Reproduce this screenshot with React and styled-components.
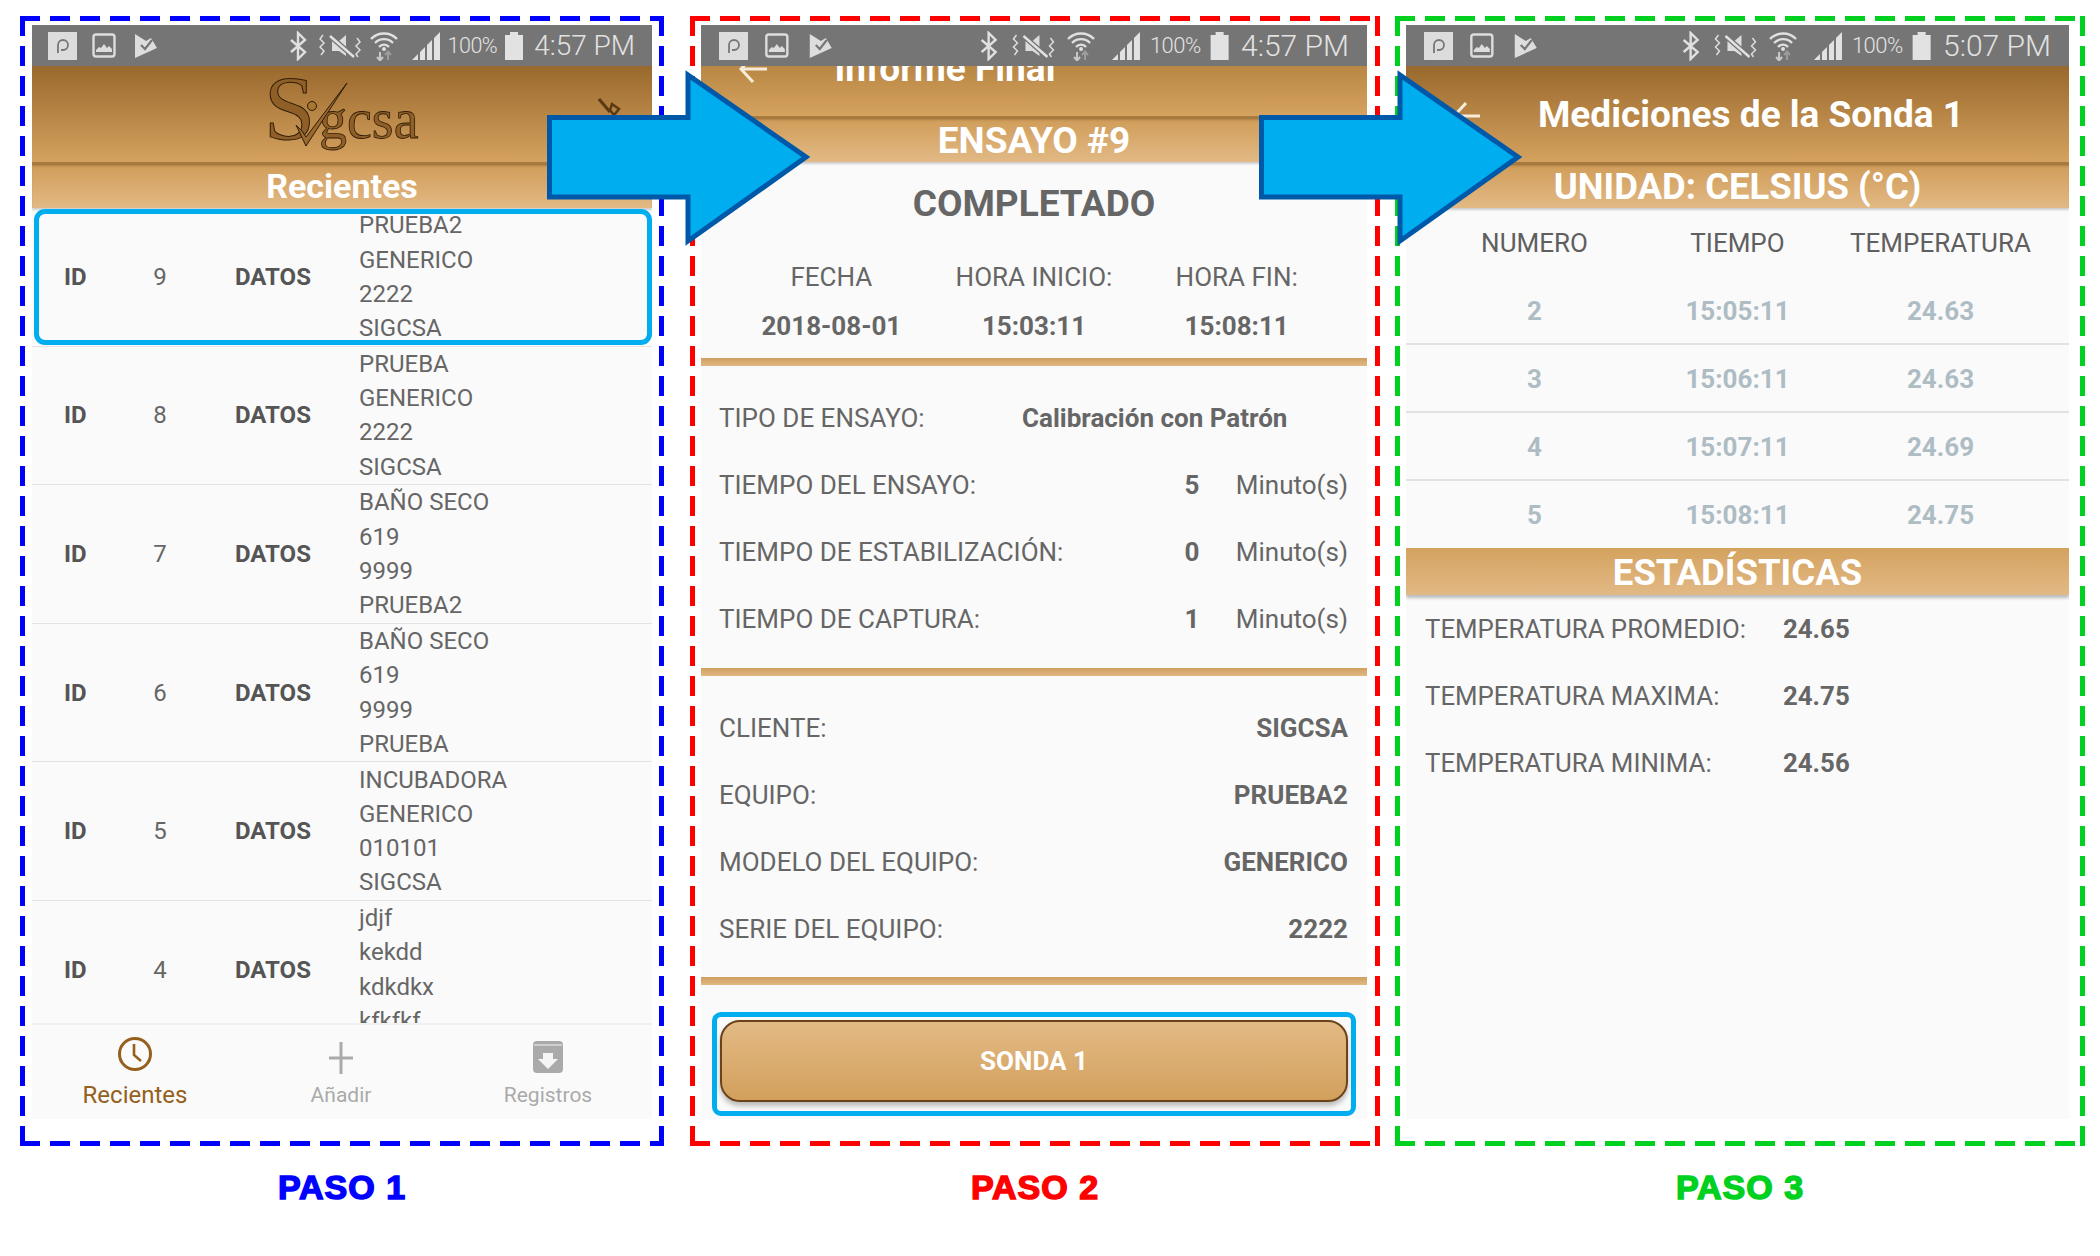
import React from 'react';
import styled, { createGlobalStyle } from 'styled-components';

const Global = createGlobalStyle`
  html, body { margin: 0; padding: 0; background: #fff; }
  body { font-family: Roboto, "Liberation Sans", sans-serif; width: 2100px; height: 1256px; overflow: hidden; }
`;

const Page = styled.div`
  position: relative;
  width: 2100px;
  height: 1256px;
  padding: 16px 0 0 20px;
  box-sizing: border-box;
  display: flex;
  align-items: flex-start;
`;

const Step = styled.section`
  width: ${p => p.$width}px;
  margin-right: ${p => p.$after}px;
  display: flex;
  flex-direction: column;
`;

const Frame = styled.div`
  box-sizing: border-box;
  height: 1130px;
  padding: 9px ${p => p.$right}px 0 ${p => p.$left}px;
  background-image:
    repeating-linear-gradient(90deg, ${p => p.$color} 0 20px, transparent 20px 30px),
    repeating-linear-gradient(90deg, ${p => p.$color} 0 20px, transparent 20px 30px),
    repeating-linear-gradient(0deg, ${p => p.$color} 0 20px, transparent 20px 30px),
    repeating-linear-gradient(0deg, ${p => p.$color} 0 20px, transparent 20px 30px);
  background-size: 100% 5px, 100% 5px, 5px 100%, 5px 100%;
  background-position: 0 0, 0 100%, 0 0, 100% 0;
  background-repeat: no-repeat;
`;

const StepLabel = styled.div`
  margin-top: 21px;
  text-align: center;
  color: ${p => p.$color};
  font: 700 34px/40px "Liberation Sans", Arial, sans-serif;
  letter-spacing: 1px;
  -webkit-text-stroke: 1.5px ${p => p.$color};
`;

const Phone = styled.div`
  height: 1094px;
  background: #fafafa;
  display: flex;
  flex-direction: column;
  overflow: hidden;
`;

const StatusBarWrap = styled.div`
  height: 41px;
  flex: none;
  background: #757575;
  display: flex;
  align-items: center;
  justify-content: space-between;
  padding: 0 ${p => p.$pr}px 0 ${p => p.$pl}px;
  color: #e2e2e2;
`;

const StatusGroup = styled.div`
  display: flex;
  align-items: center;
  gap: ${p => p.$gap}px;
`;

const StatusPercent = styled.span`
  font-size: ${p => p.$size}px;
  font-weight: 300;
  letter-spacing: -0.5px;
`;

const StatusTime = styled.span`
  font-size: ${p => p.$size}px;
  font-weight: 300;
  margin-left: ${p => p.$gap}px;
`;

const Header = styled.header`
  position: relative;
  flex: none;
  height: ${p => p.$h}px;
  background: linear-gradient(${p => p.$from}, #d5a25f);
  color: #fff;
  display: flex;
  align-items: ${p => p.$clipped ? 'flex-start' : 'center'};
  justify-content: center;
  overflow: hidden;
`;

const HeaderTitle = styled.h1`
  margin: ${p => p.$mt}px 0 0 ${p => p.$ml}px;
  font-size: ${p => p.$size}px;
  font-weight: 700;
  line-height: 1.2;
  white-space: nowrap;
`;

const HeaderIcon = styled.svg`
  position: absolute;
  left: ${p => p.$x}px;
  top: ${p => p.$y}px;
`;

const SubHeader = styled.div`
  flex: none;
  height: ${p => p.$h}px;
  box-sizing: border-box;
  background: linear-gradient(#d09c58, #e2b985);
  border-top: 2px solid #a77a3d;
  box-shadow: inset 0 3px 3px -2px rgba(90,55,15,.55), 0 2px 2px rgba(0,0,0,.18);
  position: relative;
  color: #fff;
  font-weight: 700;
  font-size: ${p => p.$size}px;
  display: flex;
  align-items: center;
  justify-content: center;
  white-space: nowrap;
`;

const List = styled.div`
  flex: 1;
  min-height: 0;
  overflow: hidden;
`;

const RecordRow = styled.div`
  position: relative;
  box-sizing: border-box;
  height: 138.6px;
  display: grid;
  grid-template-columns: 64px 107px 124px 1fr;
  padding: 0 0 0 32px;
  align-items: center;
  border-bottom: 1px solid #e3e3e3;
  color: #666;
  font-size: 24px;
  &::after {
    content: '';
    display: ${p => p.$selected ? 'block' : 'none'};
    position: absolute;
    inset: 1px 0 1px 2px;
    border: 5px solid #00aeef;
    border-radius: 11px;
    pointer-events: none;
  }
`;

const RowKey = styled.span`
  font-weight: 700;
  color: #555;
`;

const RowId = styled.span`
  justify-self: start;
  width: 64px;
  text-align: center;
`;

const RowLines = styled.div`
  line-height: 34.3px;
  white-space: nowrap;
`;

const TabBar = styled.nav`
  flex: none;
  height: 96px;
  box-sizing: border-box;
  border-top: 2px solid #f1f1f1;
  background: #fafafa;
  display: grid;
  grid-template-columns: 206px 206px 208px;
`;

const Tab = styled.div`
  display: flex;
  flex-direction: column;
  align-items: center;
  color: ${p => p.$active ? '#94601c' : '#aaa'};
  font-size: ${p => p.$active ? 24 : 21}px;
  line-height: 28px;
`;

const TabIcon = styled.svg`
  height: 44px;
  margin-top: ${p => p.$top}px;
  margin-bottom: ${p => 12 - p.$top}px;
`;

const Status = styled.div`
  height: 63px;
  display: flex;
  align-items: flex-end;
  justify-content: center;
  font-size: 37px;
  font-weight: 700;
  color: #666;
  line-height: 42px;
`;

const DateGrid = styled.div`
  margin-top: 27px;
  padding: 0 29px;
  display: grid;
  grid-template-columns: repeat(3, 1fr);
  grid-auto-rows: 49px;
  align-items: center;
  justify-items: center;
  font-size: 26px;
  color: #666;
`;

const Strong = styled.span`
  font-weight: 700;
`;

const GoldRule = styled.div`
  flex: none;
  height: 8px;
  margin: ${p => p.$mt}px 0 ${p => p.$mb}px;
  background: linear-gradient(#cf9f60, #e1b883);
`;

const InfoRow = styled.div`
  box-sizing: border-box;
  height: 67px;
  display: flex;
  align-items: center;
  padding: 2px 19px 0 18px;
  font-size: 26px;
  color: #666;
  white-space: nowrap;
`;

const InfoLabel = styled.span`
  flex: 1;
`;

const InfoMiddle = styled.span`
  font-weight: 700;
  width: ${p => p.$w}px;
  text-align: center;
`;

const InfoUnit = styled.span`
  width: 144px;
  text-align: right;
`;

const TipoLabel = styled.span`
  width: 303px;
`;

const ButtonHighlight = styled.div`
  margin: 27px 11px 0 11px;
  height: 104px;
  box-sizing: border-box;
  border: 5px solid #00aeef;
  border-radius: 9px;
  padding: 3px 3px 0;
`;

const SondaButton = styled.button`
  display: block;
  width: 100%;
  height: 82px;
  box-sizing: border-box;
  border: 2px solid #6b431a;
  border-radius: 20px;
  background: linear-gradient(#e3ba85, #d2a05c);
  box-shadow: 0 4px 5px rgba(0,0,0,.25);
  color: #fff;
  font: 700 26px Roboto, sans-serif;
`;

const TableHead = styled.div`
  display: grid;
  grid-template-columns: ${p => p.$cols};
  height: 69px;
  align-items: center;
  justify-items: center;
  font-size: 26px;
  color: #5f5f5f;
  padding: 0 27px;
`;

const TableRow = styled.div`
  display: grid;
  grid-template-columns: ${p => p.$cols};
  box-sizing: border-box;
  height: ${p => p.$last ? 67 : 68}px;
  align-items: center;
  justify-items: center;
  font-size: 26px;
  font-weight: 700;
  color: #aebcc4;
  padding: 1px 27px 0;
  border-bottom: ${p => p.$last ? 'none' : '2px solid #e2e2e2'};
`;

const StatsBar = styled.div`
  flex: none;
  height: 47px;
  box-sizing: border-box;
  padding-top: 2px;
  background: linear-gradient(#d4a25f, #e2b985);
  box-shadow: 0 3px 3px rgba(0,0,0,.25);
  color: #fff;
  font-size: 36.500px;
  font-weight: 700;
  display: flex;
  align-items: center;
  justify-content: center;
`;

const StatRow = styled.div`
  box-sizing: border-box;
  height: 67px;
  display: grid;
  grid-template-columns: 358px 1fr;
  align-items: center;
  padding: 0 0 0 19px;
  font-size: 25.8px;
  color: #666;
`;

const ArrowLayer = styled.svg`
  position: absolute;
  left: ${p => p.$x}px;
  top: 70px;
`;

function StatusBar({ time, wide }) {
  const k = wide ? 1.07 : 1;
  return (
    <StatusBarWrap $pl={wide ? 17 : 16} $pr={wide ? 18 : 17}>
      <StatusGroup $gap={15}>
        <svg width={29 * k} height="28" viewBox="0 0 29 28">
          <rect width="29" height="28" fill="#dcdcdc" />
          <path d="M10 21V13a5 5 0 1 1 5 5h-2" fill="none" stroke="#777" strokeWidth="1.8" />
        </svg>
        <svg width={24 * k} height="25" viewBox="0 0 24 25">
          <rect x="1.5" y="1.5" width="21" height="22" rx="2.5" fill="none" stroke="#ddd" strokeWidth="2.4" />
          <path d="M4 19h16v-3l-3-3-2 2-3-4-3 4-2-1-3 3z" fill="#ddd" />
        </svg>
        <svg width={22 * k} height="24" viewBox="0 0 22 24" style={{ marginLeft: 4 }}>
          <path d="M0 0l11 7L16 4l6 10-22 10z" fill="#ddd" />
          <path d="M6 11l4 4 7-9" fill="none" stroke="#777" strokeWidth="2.2" />
        </svg>
      </StatusGroup>
      <StatusGroup $gap={wide ? 9 : 8}>
        <svg width={18 * k} height="30" viewBox="0 0 18 30">
          <path d="M2 9l14 12-7 7V2l7 7L2 21" fill="none" stroke="#e0e0e0" strokeWidth="2.4" />
        </svg>
        <svg width={42 * k} height="28" viewBox="0 0 42 28" style={{ marginLeft: 4 }}>
          <path d="M13 9h7l7-6v21l-7-5h-7z" fill="#ddd" />
          <path d="M11 4l24 21" stroke="#757575" strokeWidth="5" />
          <path d="M11 4l24 21" stroke="#e2e2e2" strokeWidth="2.4" />
          <path d="M4 3L1 7l4 4-4 4 4 4-3 4M38 6l3 4-4 4 4 4-4 4 2 3" fill="none" stroke="#ddd" strokeWidth="1.5" />
        </svg>
        <svg width={30 * k} height="30" viewBox="0 0 30 30">
          <path d="M2 8a18 18 0 0 1 26 0M6 12a12.500 12.500 0 0 1 18 0M10 16a6.500 6.500 0 0 1 10 0" fill="none" stroke="#e0e0e0" strokeWidth="2.4" />
          <circle cx="15" cy="18" r="2" fill="#e0e0e0" />
          <path d="M11 21v8M8 26l3 3.500L14 26" fill="none" stroke="#c8c8c8" strokeWidth="2" />
          <path d="M19 29v-8M16 24l3-3.500 3 3.500" fill="none" stroke="#9c9c9c" strokeWidth="2" />
        </svg>
        <svg width={28 * k} height="28" viewBox="0 0 28 28" style={{ marginLeft: 5 }}>
          <path d="M0 28l6-6v6zM8 28v-8l5-5v13zM15 28V13l5-5v20zM22 28V6l6-6v28z" fill="#e2e2e2" />
        </svg>
        <StatusPercent $size={wide ? 22 : 21.5}>100%</StatusPercent>
        <svg width={18 * k} height="28" viewBox="0 0 18 28">
          <path d="M0 3h5V0h8v3h5v25H0z" fill="#e2e2e2" />
        </svg>
        <StatusTime $size={wide ? 30 : 28} $gap={3}>{time}</StatusTime>
      </StatusGroup>
    </StatusBarWrap>
  );
}

const records = [
  ['9', ['PRUEBA2', 'GENERICO', '2222', 'SIGCSA']],
  ['8', ['PRUEBA', 'GENERICO', '2222', 'SIGCSA']],
  ['7', ['BAÑO SECO', '619', '9999', 'PRUEBA2']],
  ['6', ['BAÑO SECO', '619', '9999', 'PRUEBA']],
  ['5', ['INCUBADORA', 'GENERICO', '010101', 'SIGCSA']],
  ['4', ['jdjf', 'kekdd', 'kdkdkx', 'kfkfkf']],
];

function Logo() {
  return (
    <svg width="170" height="84" viewBox="0 0 170 84" style={{ marginLeft: 12 }}>
      <text x="1" y="67" fontFamily="'Liberation Serif', serif" fontSize="92" fill="#8f5f27" stroke="#2e1c08" strokeWidth="1">S</text>
      <text x="56" y="66" fontFamily="'Liberation Serif', serif" fontSize="56" fill="#8f5f27" stroke="#2e1c08" strokeWidth="0.8">gcsa</text>
      <circle cx="49" cy="34" r="4.500" fill="#a8762f" stroke="#2e1c08" />
      <path d="M84 11L43 74 33 53l6 6 4 6z" fill="#9a692d" stroke="#2e1c08" strokeWidth="1" />
    </svg>
  );
}

function BackArrow({ x, y }) {
  return (
    <HeaderIcon $x={x} $y={y} width="30" height="32" viewBox="0 0 30 32">
      <path d="M29 16H4M15 3L3 16l12 13" fill="none" stroke="#f7ecd9" strokeWidth="3" />
    </HeaderIcon>
  );
}

function StepOne() {
  return (
    <Phone>
      <StatusBar time="4:57 PM" />
      <Header $h={96} $from="#99682c">
        <Logo />
        <HeaderIcon $x={566} $y={32} width="24" height="20" viewBox="0 0 24 20">
          <path d="M1 1l11 13" stroke="#5a3a14" strokeWidth="3" />
          <path d="M14 6l7 5-5 6-4-5z" fill="none" stroke="#5a3a14" strokeWidth="2.5" />
        </HeaderIcon>
      </Header>
      <SubHeader $h={46} $size={34}>Recientes</SubHeader>
      <List>
        {records.map(([id, lines], i) => (
          <RecordRow key={id} $selected={i === 0}>
            <RowKey>ID</RowKey>
            <RowId>{id}</RowId>
            <RowKey>DATOS</RowKey>
            <RowLines>{lines.map(l => <div key={l}>{l}</div>)}</RowLines>
          </RecordRow>
        ))}
      </List>
      <TabBar>
        <Tab $active>
          <TabIcon $top={10} width="36" viewBox="0 0 36 44">
            <circle cx="18" cy="19" r="15.500" fill="none" stroke="#94601c" strokeWidth="3" />
            <path d="M17 9v11l7 6" fill="none" stroke="#94601c" strokeWidth="2.600" />
          </TabIcon>
          Recientes
        </Tab>
        <Tab>
          <TabIcon $top={8} width="30" viewBox="0 0 30 44">
            <path d="M15 9v32M3 25h24" stroke="#aaa" strokeWidth="3" />
          </TabIcon>
          Añadir
        </Tab>
        <Tab>
          <TabIcon $top={8} width="34" viewBox="0 0 34 44">
            <rect x="2" y="8" width="30" height="32" rx="4" fill="#aaa" />
            <path d="M3 12h28" stroke="#e8e8e8" strokeWidth="1.2" />
            <path d="M12 20h10v6h5L17 36 7 26h5z" fill="#f5f5f5" />
          </TabIcon>
          Registros
        </Tab>
      </TabBar>
    </Phone>
  );
}

function StepTwo() {
  return (
    <Phone>
      <StatusBar time="4:57 PM" wide />
      <Header $h={50} $from="#b98744" $clipped>
        <BackArrow x={37} y={-13} />
        <HeaderTitle $size={37} $mt={-19} $ml={-178}>Informe Final</HeaderTitle>
      </Header>
      <SubHeader $h={46} $size={37}>ENSAYO #9</SubHeader>
      <Status>COMPLETADO</Status>
      <DateGrid>
        <span>FECHA</span><span>HORA INICIO:</span><span>HORA FIN:</span>
        <Strong>2018-08-01</Strong><Strong>15:03:11</Strong><Strong>15:08:11</Strong>
      </DateGrid>
      <GoldRule $mt={8} $mb={17} />
      <InfoRow>
        <TipoLabel>TIPO DE ENSAYO:</TipoLabel>
        <Strong>Calibración con Patrón</Strong>
      </InfoRow>
      <InfoRow>
        <InfoLabel>TIEMPO DEL ENSAYO:</InfoLabel>
        <InfoMiddle $w={24}>5</InfoMiddle>
        <InfoUnit>Minuto(s)</InfoUnit>
      </InfoRow>
      <InfoRow>
        <InfoLabel>TIEMPO DE ESTABILIZACIÓN:</InfoLabel>
        <InfoMiddle $w={24}>0</InfoMiddle>
        <InfoUnit>Minuto(s)</InfoUnit>
      </InfoRow>
      <InfoRow>
        <InfoLabel>TIEMPO DE CAPTURA:</InfoLabel>
        <InfoMiddle $w={24}>1</InfoMiddle>
        <InfoUnit>Minuto(s)</InfoUnit>
      </InfoRow>
      <GoldRule $mt={17} $mb={17} />
      <InfoRow><InfoLabel>CLIENTE:</InfoLabel><Strong>SIGCSA</Strong></InfoRow>
      <InfoRow><InfoLabel>EQUIPO:</InfoLabel><Strong>PRUEBA2</Strong></InfoRow>
      <InfoRow><InfoLabel>MODELO DEL EQUIPO:</InfoLabel><Strong>GENERICO</Strong></InfoRow>
      <InfoRow><InfoLabel>SERIE DEL EQUIPO:</InfoLabel><Strong>2222</Strong></InfoRow>
      <GoldRule $mt={16} $mb={0} />
      <ButtonHighlight>
        <SondaButton>SONDA 1</SondaButton>
      </ButtonHighlight>
    </Phone>
  );
}

const cols = 'repeat(3, 1fr)';
const measures = [
  ['2', '15:05:11', '24.63'],
  ['3', '15:06:11', '24.63'],
  ['4', '15:07:11', '24.69'],
  ['5', '15:08:11', '24.75'],
];
const stats = [
  ['TEMPERATURA PROMEDIO:', '24.65'],
  ['TEMPERATURA MAXIMA:', '24.75'],
  ['TEMPERATURA MINIMA:', '24.56'],
];

function StepThree() {
  return (
    <Phone>
      <StatusBar time="5:07 PM" wide />
      <Header $h={96} $from="#99682c">
        <BackArrow x={45} y={34} />
        <HeaderTitle $size={37} $mt={3} $ml={27}>Mediciones de la Sonda 1</HeaderTitle>
      </Header>
      <SubHeader $h={46} $size={36.5}>UNIDAD: CELSIUS (°C)</SubHeader>
      <TableHead $cols={cols}>
        <span>NUMERO</span><span>TIEMPO</span><span>TEMPERATURA</span>
      </TableHead>
      {measures.map((m, i) => (
        <TableRow key={m[0]} $cols={cols} $last={i === measures.length - 1}>
          {m.map(v => <span key={v}>{v}</span>)}
        </TableRow>
      ))}
      <StatsBar>ESTADÍSTICAS</StatsBar>
      {stats.map(([k, v]) => (
        <StatRow key={k}><span>{k}</span><Strong>{v}</Strong></StatRow>
      ))}
    </Phone>
  );
}

function Arrow({ x }) {
  return (
    <ArrowLayer $x={x} width="266" height="176" viewBox="0 0 266 176">
      <path d="M2.500 47.500H141V5L259 87 141 171V127H2.500z" fill="#00aeef" stroke="#0058a8" strokeWidth="5" />
    </ArrowLayer>
  );
}

export default function App() {
  return (
    <Page>
      <Global />
      <Step $width={644} $after={26}>
        <Frame $color="#0000ff" $left={12} $right={12}><StepOne /></Frame>
        <StepLabel $color="#0000ff">PASO 1</StepLabel>
      </Step>
      <Step $width={690} $after={15}>
        <Frame $color="#ff0000" $left={11} $right={13}><StepTwo /></Frame>
        <StepLabel $color="#ff0000">PASO 2</StepLabel>
      </Step>
      <Step $width={690} $after={0}>
        <Frame $color="#00d020" $left={11} $right={16}><StepThree /></Frame>
        <StepLabel $color="#00d020">PASO 3</StepLabel>
      </Step>
      <Arrow x={547} />
      <Arrow x={1259} />
    </Page>
  );
}
